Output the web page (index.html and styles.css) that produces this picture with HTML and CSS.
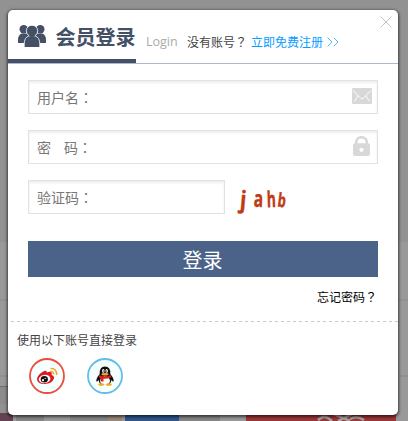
FILE: index.html
```
<!DOCTYPE html>
<html lang="zh-CN">
<head>
<meta charset="utf-8">
<title>会员登录</title>
<link rel="stylesheet" href="styles.css">
</head>
<body>
<div class="backdrop">
  <div class="bd-top"></div>
  <div class="bd-mid"></div>
  <div class="bd-row"></div>
  <div class="bd-band"></div>
  <div class="bd-strip">
    <i class="s-purple"></i><i class="s-gray"></i><i class="s-light"></i><i class="s-gray2"></i><i class="s-tan"></i><i class="s-gap"></i><i class="s-blue"></i><i class="s-gray3"></i><i class="s-light2"></i>
    <svg class="s-red" viewBox="0 0 150 8"><path d="M72 7q5-5 10-2l4 3M88 1l16 7M106 1L92 8M104 6q7-4 14 1" fill="none" stroke="#aaa3a3" stroke-width="2.500"/></svg>
  </div>
</div>
<main class="dialog">
  <svg class="close" viewBox="0 0 12 12"><path d="M.5.5l11 11M11.500.5l-11 11" stroke="#c4c4c4" fill="none"/></svg>
  <header class="head">
    <div class="brand">
      <svg class="users" viewBox="0 0 28 22"><g fill="#435066"><circle cx="5.700" cy="4.200" r="4.200"/><circle cx="22.300" cy="4.200" r="4.200"/><path d="M0 18v-3q0-5.500 4-6.500h20q4 1 4 6.500v3z"/></g><g fill="#435066" stroke="#fff" stroke-width=".8"><path d="M6.200 23v-4q0-6.500 4.600-8h6.400q4.600 1.500 4.600 8v4z"/><circle cx="14" cy="5.900" r="5.700"/></g><path d="M11 10h6l-1 3h-4z" fill="#435066"/></svg>
      <h1>会员登录</h1>
    </div>
    <span class="login-en">Login</span>
    <span class="ask">没有账号<span class="mark" lang="zh-TW">？</span></span>
    <a class="reg">立即免费注册</a>
    <svg class="arrows" viewBox="0 0 12 10"><path d="M.7.7L5 5 .7 9.300M6.700.7L11 5 6.700 9.300" fill="none" stroke="#58b5fa"/></svg>
  </header>
  <form class="form">
    <div class="field"><span>用户名<span class="mark" lang="zh-TW">：</span></span>
      <svg class="mail" viewBox="0 0 20 16"><rect width="20" height="16" rx="1.200" fill="#d8d8d8"/><path d="M1 2.500l8 8q1 1 2 0l8-8M2.500 13.500L6 8M17.500 13.500L14 8" fill="none" stroke="#fff" stroke-width="1"/></svg>
    </div>
    <div class="field"><span class="pw"><span>密</span><span>码<span class="mark" lang="zh-TW">：</span></span></span>
      <svg class="lock" viewBox="0 0 17 20"><path d="M3.200 8V6.500a5.300 5.300 0 0 1 10.600 0V8" fill="none" stroke="#d8d8d8" stroke-width="2.600"/><rect y="7.200" width="17" height="12.800" rx="2" fill="#d8d8d8"/><circle cx="8.500" cy="13.800" r="2.100" fill="#fff"/></svg>
    </div>
    <div class="code-row">
      <div class="field short"><span>验证码<span class="mark" lang="zh-TW">：</span></span></div>
      <div class="captcha"><span class="c1">j</span><span class="c2">a</span><span class="c3">h</span><span class="c4">b</span></div>
    </div>
    <div class="submit">登录</div>
    <a class="forgot">忘记密码<span class="mark" lang="zh-TW">？</span></a>
  </form>
  <footer class="social">
    <p>使用以下账号直接登录</p>
    <div class="icons">
      <svg viewBox="0 0 36 36"><circle cx="18" cy="18" r="17" fill="#f5fffe" stroke="#ef4c3c" stroke-width="1.800"/><path d="M12 15q4-3 5.500-2l.3 1.500q4-1.500 5 .5l-.3 2q3 1 2.500 3.500-2 5-9 5.500-7 .3-8-4.500 0-3.500 4-6.500z" fill="#df1720"/><ellipse cx="15.600" cy="21" rx="5.900" ry="4.100" fill="#fff" transform="rotate(-8 15.600 21)"/><ellipse cx="15.300" cy="21.300" rx="3.600" ry="3.200" fill="#111"/><circle cx="14" cy="22.200" r="1.100" fill="#fff"/><circle cx="16.200" cy="20.400" r=".6" fill="#fff"/><path d="M21.500 10.500q6-.8 6.200 6.500M21.300 13.500q3.400-.3 3.300 3" fill="none" stroke="#f4a126" stroke-width="1.500"/></svg>
      <svg viewBox="0 0 36 36"><circle cx="18" cy="18" r="17" fill="#f5fffe" stroke="#62bde8" stroke-width="1.800"/><path d="M12.700 16q-.5-7.500 5.300-7.500T23.300 16q3.500 4 3.400 7.200-1.200.8-2.400-1.200 0 5-6.300 5t-6.300-5q-1.200 2-2.400 1.200Q9.200 20 12.700 16z" fill="#101010"/><ellipse cx="18" cy="22.700" rx="5" ry="4.300" fill="#fff"/><ellipse cx="16.300" cy="12.900" rx="1.200" ry="1.900" fill="#fff"/><ellipse cx="19.700" cy="12.900" rx="1.200" ry="1.900" fill="#fff"/><circle cx="16.600" cy="13" r=".6"/><circle cx="19.400" cy="13" r=".6"/><ellipse cx="18" cy="16.300" rx="3.600" ry="1.300" fill="#f5a81c"/><path d="M12.300 17q5.700 3.300 11.400 0l.5 2.300q-4 1.800-7.700 1.500v2.700h-2.800v-3.300l-1.700-.9z" fill="#e31c23"/><ellipse cx="14.200" cy="26.600" rx="3" ry="1.400" fill="#f5a81c"/><ellipse cx="21.800" cy="26.600" rx="3" ry="1.400" fill="#f5a81c"/></svg>
    </div>
  </footer>
</main>
</body>
</html>
```
FILE: styles.css
```
* { box-sizing: border-box; }
body {
  margin: 0;
  width: 408px;
  height: 421px;
  overflow: hidden;
  padding: 10px 10px 6px 8px;
  background: #929292;
  font-family: "Noto Sans CJK SC", sans-serif;
  font-size: 12px;
}
svg { display: block; flex: none; }
h1, p { margin: 0; }
.mark { font-family: "Noto Sans CJK TC", sans-serif; }
.backdrop {
  position: absolute;
  inset: 0;
  display: flex;
  flex-direction: column;
  background: #999;
}
.bd-top { height: 242px; background: #929292; }
.bd-mid { height: 59px; border-bottom: 2px solid #919191; }
.bd-row { height: 76px; border-bottom: 2px solid #919191; }
.bd-band { width: 8px; height: 28px; margin-top: 9px; background: #8c8c8c; border-top: 1px solid #6f6f6f; border-bottom: 10px solid #919191; }
.bd-strip { display: flex; height: 8px; margin-top: -1px; }
.bd-strip i { flex: none; height: 8px; }
.s-purple { width: 13px; background: #644253; }
.s-gray { width: 28px; background: #858585; margin-left: 3px; }
.s-light { width: 26px; background: #999; }
.s-gray2 { width: 38px; background: #858585; }
.s-tan { width: 14px; background: #99877a; }
.s-gap { width: 3px; background: #999; }
.s-blue { width: 54px; background: #31568a; }
.s-gray3 { width: 41px; background: #858585; }
.s-light2 { width: 26px; background: #999; }
.s-red { width: 150px; height: 8px; background: #9b3636; }
.dialog {
  position: relative;
  width: 390px;
  height: 405px;
  background: #fff;
  border-radius: 5px;
  box-shadow: 0 1px 3px 1px rgba(0, 0, 0, .6);
}
.close {
  position: absolute;
  top: 6px;
  right: 6px;
  width: 12px;
  height: 12px;
}
.head {
  display: flex;
  height: 54px;
  border-bottom: 1px solid #adb6d1;
}
.brand {
  display: flex;
  width: 128px;
  height: 53px;
  padding-left: 10px;
  border-bottom: 4px solid #435066;
}
.users { width: 28px; height: 22px; margin-top: 15px; }
h1 {
  margin: 12px 0 0 9.5px;
  font-size: 20px;
  line-height: 30px;
  color: #435066;
  white-space: nowrap;
}
.login-en {
  width: 41px;
  padding-left: 10px;
  margin-top: 22px;
  font-family: "Open Sans", sans-serif;
  font-size: 12.5px;
  line-height: 20px;
  color: #aaa;
}
.ask, .reg { margin-top: 22px; line-height: 20px; }
.ask { margin-left: 10px; width: 64px; color: #444; }
.reg { color: #0a9dff; }
.arrows { width: 12px; height: 10px; margin: 27px 0 0 4px; }
.form {
  display: flex;
  flex-direction: column;
  padding: 16px 20px 0;
}
.field {
  display: flex;
  justify-content: space-between;
  width: 350px;
  height: 34px;
  padding: 0 5px 0 8px;
  margin-bottom: 16px;
  border: 1px solid #e2e2e2;
  box-shadow: inset 0 2px 3px #eee;
  font-size: 14px;
  line-height: 33px;
  color: #777;
}
.pw { display: flex; gap: 13px; }
.mail { width: 20px; height: 16px; margin-top: 7px; }
.lock { width: 17px; height: 20px; margin: 5px 2px 0 0; }
.code-row { display: flex; height: 61px; }
.short { width: 197px; }
.captcha {
  display: flex;
  gap: 4px;
  height: 34px;
  margin-left: 14px;
  font-family: "Open Sans", sans-serif;
  font-weight: 700;
  line-height: 34px;
  color: #c03b13;
  -webkit-text-stroke: .4px #c03b13;
}
.captcha span { width: 9px; text-align: center; }
.c1 { font-size: 24px; transform: translateY(2px) rotate(5deg) scaleX(.85); }
.c2 { font-size: 23px; transform: translate(0, 1px) rotate(2deg) scaleX(.68); transform-origin: 6px 50%; }
.c3 { font-size: 22px; transform: translate(-1px, 1px) rotate(-2deg) scaleX(.63); transform-origin: 7px 50%; }
.c4 { font-size: 19px; transform: translate(-2px, 3px) rotate(7deg) scaleX(.68); transform-origin: 6px 50%; }
.submit {
  height: 36px;
  background: #4b6388;
  color: #fff;
  font-size: 20px;
  line-height: 37px;
  text-align: center;
  text-indent: -1px;
}
.forgot { align-self: flex-end; margin: 10px 1px 0 0; line-height: 20px; color: #000; }
.social {
  margin: 14px 0 0 3px;
  padding: 9px 0 0 6px;
  height: 90px;
  background: repeating-linear-gradient(90deg, #c9c9c9 0 3px, transparent 3px 6px) 0 0 / 100% 1px no-repeat;
}
.social p { line-height: 20px; color: #444; }
.icons { display: flex; gap: 22px; margin: 8px 0 0 12px; }
.icons svg { width: 36px; height: 36px; }
```
